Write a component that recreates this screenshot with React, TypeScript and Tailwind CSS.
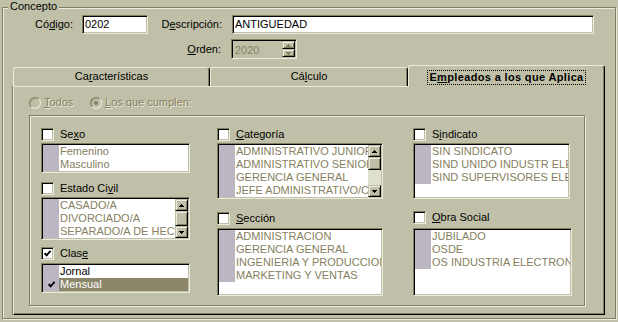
import React from "react";

const SUNKEN =
  "border border-t-[#808060] border-l-[#808060] border-r-[#ececde] border-b-[#ececde] shadow-[inset_1px_1px_0_#000000,inset_-1px_-1px_0_#c0c0a8]";
const RAISED =
  "bg-[#c0c0a8] border border-t-[#c0c0a8] border-l-[#c0c0a8] border-r-black border-b-black shadow-[inset_1px_1px_0_#ececde,inset_-1px_-1px_0_#808060]";

function Arrow({ down, color = "#000" }: { down?: boolean; color?: string }) {
  return (
    <svg width="5" height="3" viewBox="0 0 5 3" shapeRendering="crispEdges">
      <polygon points={down ? "0,0 5,0 2.5,3" : "2.5,0 5,3 0,3"} fill={color} />
    </svg>
  );
}

function Tick({ w = 7, h = 7 }: { w?: number; h?: number }) {
  return (
    <svg width={w} height={h} viewBox="0 0 7 7">
      <path d="M0.6 3.2 L2.6 5.4 L6.6 0.8" stroke="#000" strokeWidth="1.9" fill="none" />
    </svg>
  );
}

function Check({ checked, label }: { checked?: boolean; label: React.ReactNode }) {
  return (
    <div className="flex items-center h-[13px]">
      <span className={`w-[13px] h-[13px] shrink-0 bg-white flex items-center justify-center ${SUNKEN}`}>
        {checked && <Tick />}
      </span>
      <span className="ml-[6px] whitespace-nowrap">{label}</span>
    </div>
  );
}

function Radio({ checked, label, className }: { checked?: boolean; label: React.ReactNode; className?: string }) {
  return (
    <div className={`flex items-center ${className ?? ""}`}>
      <span className="w-[12px] h-[12px] shrink-0 rounded-full border border-t-[#808060] border-l-[#808060] border-r-[#ececde] border-b-[#ececde] bg-[#c0c0a8] shadow-[inset_1px_1px_0_#a4a48a] flex items-center justify-center">
        {checked && <span className="w-[4px] h-[4px] rounded-full bg-[#808060]" />}
      </span>
      <span className="ml-[3px] whitespace-nowrap text-[#868060] [text-shadow:1px_1px_0_#ececde]">{label}</span>
    </div>
  );
}

function ScrollBar({ thumb }: { thumb: string }) {
  return (
    <div className="w-[13px] shrink-0 flex flex-col bg-[#e0e0d0]">
      <div className={`h-[12px] flex items-center justify-center ${RAISED}`}>
        <Arrow />
      </div>
      <div className={`${thumb} ${RAISED}`} />
      <div className="flex-1" />
      <div className={`h-[12px] flex items-center justify-center ${RAISED}`}>
        <Arrow down />
      </div>
    </div>
  );
}

function ListBox({
  items,
  className,
  thumb,
  enabled,
  selected,
}: {
  items: string[];
  className: string;
  thumb?: string;
  enabled?: boolean;
  selected?: number;
}) {
  return (
    <div className={`bg-white p-[1px] flex ${SUNKEN} ${className}`}>
      <div className="flex-1 min-w-0 overflow-hidden">
        {items.map((it, i) => (
          <div key={it} className="flex h-[13px]">
            <div className="w-[16px] shrink-0 bg-[#bcb6c2] flex items-center justify-center">
              {selected === i && <Tick w={9} h={7} />}
            </div>
            <div
              className={`flex-1 pl-[1px] whitespace-nowrap overflow-hidden ${
                selected === i ? "bg-[#8c876a] text-white" : enabled ? "text-black" : "text-[#868060]"
              }`}
            >
              {it}
            </div>
          </div>
        ))}
      </div>
      {thumb && <ScrollBar thumb={thumb} />}
    </div>
  );
}

function Tab({ children, className }: { children: React.ReactNode; className: string }) {
  return (
    <div
      className={`${className} bg-[#c0c0a8] border-l border-t border-r border-l-[#ececde] border-t-[#ececde] border-r-black rounded-t-[3px] shadow-[inset_-1px_0_0_#808060] flex justify-center pt-[2px]`}
    >
      <span className="whitespace-nowrap">{children}</span>
    </div>
  );
}

export default function App() {
  return (
    <div className="w-[618px] h-[322px] overflow-hidden bg-[#c0c0a8] pt-[7px] pl-[2px] text-[11px] leading-[13px] text-black font-['Liberation_Sans',Arial,sans-serif]">
      <div className="relative w-[614px] h-[312px] border border-[#808060] shadow-[inset_1px_1px_0_#ececde,1px_1px_0_#ececde]">
        <span className="absolute left-[5px] -top-[8px] px-[2px] bg-[#c0c0a8]">Concepto</span>

        {/* Código / Descripción */}
        <div className="mt-[7px] flex items-center h-[19px]">
          <span className="ml-[27px] w-[43px] text-right whitespace-nowrap">
            Có<u>d</u>igo:
          </span>
          <div className={`ml-[9px] w-[66px] h-[19px] bg-white pl-[2px] pt-[2px] ${SUNKEN}`}>0202</div>
          <span className="ml-[4px] w-[70px] text-right whitespace-nowrap">
            D<u>e</u>scripción:
          </span>
          <div className={`ml-[10px] w-[362px] h-[19px] bg-white pl-[2px] pt-[2px] ${SUNKEN}`}>ANTIGUEDAD</div>
        </div>

        {/* Orden */}
        <div className="mt-[5px] flex items-center h-[20px]">
          <span className="ml-[148px] w-[70px] text-right whitespace-nowrap">
            <u>O</u>rden:
          </span>
          <div className={`ml-[10px] w-[66px] h-[20px] bg-[#c0c0a8] p-[1px] flex ${SUNKEN}`}>
            <span className="flex-1 pl-[2px] pt-[3px] text-[#868060]">2020</span>
            <div className="w-[13px] flex flex-col">
              <div className={`h-[8px] flex items-center justify-center ${RAISED}`}>
                <Arrow color="#808060" />
              </div>
              <div className={`h-[8px] flex items-center justify-center ${RAISED}`}>
                <Arrow down color="#808060" />
              </div>
            </div>
          </div>
        </div>

        {/* Page control */}
        <div className="mt-[6px] ml-[10px]">
          <div className="flex items-end h-[21px]">
            <Tab className="w-[197px] h-[19px]">
              Ca<u>r</u>acterísticas
            </Tab>
            <Tab className="w-[198px] h-[19px]">
              Cá<u>l</u>culo
            </Tab>
            <div className="relative z-10 -mb-[1px] w-[197px] h-[22px] bg-[#c0c0a8] border-l border-t border-r border-l-[#ececde] border-t-[#ececde] border-r-black rounded-t-[3px] shadow-[inset_-1px_0_0_#808060] flex justify-center pt-[4px]">
              <span className="h-[15px] px-[1px] border border-dotted border-black font-bold tracking-[0.35px] whitespace-nowrap">
                E<u>m</u>pleados a los que Aplica
              </span>
            </div>
          </div>

          <div className="w-[592px] h-[229px] border border-t-[#ececde] border-l-[#ececde] border-r-black border-b-black shadow-[inset_-1px_-1px_0_#808060,-1px_0_0_#808060]">
            <div className="mt-[9px] ml-[15px] flex items-center h-[13px]">
              <Radio className="w-[61px]" label={<><u>T</u>odos</>} />
              <Radio checked label={<><u>L</u>os que cumplen:</>} />
            </div>

            <div className="mt-[6px] ml-[15px] w-[556px] h-[191px] border border-[#808060] shadow-[inset_1px_1px_0_#ececde,1px_1px_0_#ececde] pt-[12px] pl-[11px] flex">
              <div className="w-[149px] flex flex-col">
                <Check label={<>Se<u>x</u>o</>} />
                <ListBox className="mt-[2px] w-[149px] h-[30px]" items={["Femenino", "Masculino"]} />
                <div className="mt-[9px]">
                  <Check label={<>Estado Ci<u>v</u>il</>} />
                </div>
                <ListBox
                  className="mt-[2px] w-[149px] h-[43px]"
                  items={["CASADO/A", "DIVORCIADO/A", "SEPARADO/A DE HECHO"]}
                  thumb="h-[15px]"
                />
                <div className="mt-[7px]">
                  <Check checked label={<>Clas<u>e</u></>} />
                </div>
                <ListBox className="mt-[3px] w-[149px] h-[30px]" items={["Jornal", "Mensual"]} enabled selected={1} />
              </div>

              <div className="ml-[27px] w-[166px] flex flex-col">
                <Check label={<><u>C</u>ategoría</>} />
                <ListBox
                  className="mt-[2px] w-[166px] h-[56px]"
                  items={["ADMINISTRATIVO JUNIOR", "ADMINISTRATIVO SENIOR", "GERENCIA GENERAL", "JEFE ADMINISTRATIVO/CONTABLE"]}
                  thumb="h-[13px]"
                />
                <div className="mt-[13px]">
                  <Check label={<><u>S</u>ección</>} />
                </div>
                <ListBox
                  className="mt-[3px] w-[166px] h-[68px]"
                  items={["ADMINISTRACION", "GERENCIA GENERAL", "INGENIERIA Y PRODUCCION", "MARKETING Y VENTAS"]}
                />
              </div>

              <div className="ml-[30px] w-[159px] flex flex-col">
                <Check label={<>S<u>i</u>ndicato</>} />
                <ListBox
                  className="mt-[2px] w-[157px] h-[56px]"
                  items={["SIN SINDICATO", "SIND UNIDO INDUSTR ELECTR", "SIND SUPERVISORES ELECTR"]}
                />
                <div className="mt-[12px]">
                  <Check label={<><u>O</u>bra Social</>} />
                </div>
                <ListBox
                  className="mt-[4px] w-[159px] h-[68px]"
                  items={["JUBILADO", "OSDE", "OS INDUSTRIA ELECTRONICA"]}
                />
              </div>
            </div>
          </div>
        </div>
      </div>
    </div>
  );
}
